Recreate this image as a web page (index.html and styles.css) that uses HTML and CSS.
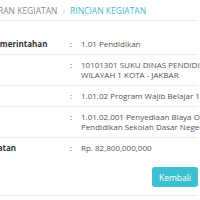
FILE: index.html
```html
<!DOCTYPE html>
<html>
<head>
<meta charset="utf-8">
<link rel="stylesheet" href="styles.css">
</head>
<body>
<div class="page">
  <div class="crumbs">
    <span class="crumb">DAFTAR ANGGARAN KEGIATAN</span>
    <span class="sep">›</span>
    <span class="crumb active">RINCIAN KEGIATAN</span>
  </div>
  <div class="detail">
    <div class="row"><div class="label">Urusan Pemerintahan</div><div class="colon">:</div><div class="value">1.01 Pendidikan</div></div>
    <div class="row"><div class="label">SKPD</div><div class="colon">:</div><div class="value">10101301 SUKU DINAS PENDIDIKAN<br>WILAYAH 1 KOTA - JAKBAR</div></div>
    <div class="row"><div class="label">Program</div><div class="colon">:</div><div class="value">1.01.02 Program Wajib Belajar 12 Tahun</div></div>
    <div class="row"><div class="label">Kegiatan</div><div class="colon">:</div><div class="value">1.01.02.001 Penyediaan Biaya Operasional<br>Pendidikan Sekolah Dasar Negeri</div></div>
    <div class="row"><div class="label">Pagu Kegiatan</div><div class="colon">:</div><div class="value">Rp. 82,800,000,000</div></div>
  </div>
  <div class="actions">
    <button class="btn">Kembali</button>
  </div>
</div>
</body>
</html>
```

FILE: styles.css
```css
html, body {
  margin: 0;
  padding: 0;
  background: #fff;
  overflow: hidden;
}
.page {
  margin-left: -41px;
  width: 239px;
  font-family: "Open Sans", "Noto Sans", sans-serif;
  font-size: 8px;
  color: #555;
}
.crumbs {
  display: flex;
  align-items: center;
  gap: 5px;
  height: 20px;
  border-bottom: 1px solid #ececec;
  font-size: 8.5px;
  color: #8a8a8a;
  white-space: nowrap;
  margin-left: -24px;
}
.crumb.active {
  color: #4fb8cc;
}
.sep {
  color: #ccc;
}
.detail {
  margin-top: 13px;
  white-space: nowrap;
}
.row {
  display: grid;
  grid-template-columns: 111px 11px 1fr;
  border-top: 1px solid #ececec;
}
.row:first-child {
  border-top: none;
}
.row > div {
  padding: 5px 0;
  line-height: 10px;
}
.label {
  font-weight: 700;
  color: #333;
}
.actions {
  display: flex;
  justify-content: flex-end;
  margin-top: 9px;
  padding-bottom: 8px;
  border-bottom: 1px solid #ececec;
}
.btn {
  font-family: inherit;
  font-size: 8.5px;
  color: #fff;
  background: #3cbfd0;
  border: none;
  border-radius: 3px;
  height: 20px;
  padding: 0 7px;
}
```
